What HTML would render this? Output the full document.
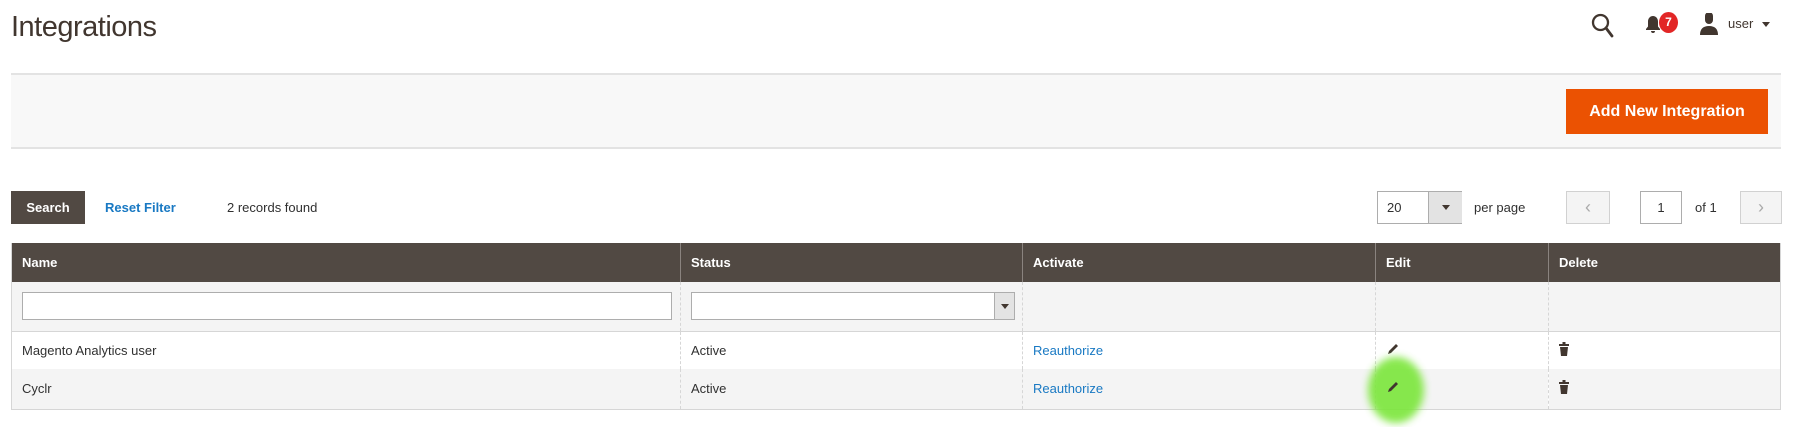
<!DOCTYPE html>
<html><head><meta charset="utf-8"><style>
*{box-sizing:border-box;margin:0;padding:0}
body{width:1798px;height:427px;background:#fff;font-family:"Liberation Sans",sans-serif;color:#303030;position:relative;overflow:hidden;font-size:13px}
.a{position:absolute}
h1{position:absolute;left:11px;top:11px;font-weight:400;font-size:29px;color:#41362f;letter-spacing:-0.5px}
.bar{left:11px;top:73px;width:1770px;height:76px;background:#f8f8f8;border-top:2px solid #e3e3e3;border-bottom:2px solid #e3e3e3}
.add{left:1566px;top:89px;width:202px;height:45px;background:#eb5202;color:#fff;font-weight:bold;font-size:16px;line-height:45px;text-align:center}
.search{left:11px;top:191px;width:74px;height:33px;background:#514943;color:#fff;font-weight:bold;line-height:33px;text-align:center}
.link{color:#1979c3}
table{position:absolute;left:11px;top:243px;width:1770px;border-collapse:collapse;font-size:13px}
th{background:#514943;color:#fff;text-align:left;font-weight:bold;height:39px;padding-left:10px;border-left:1px solid #8a837f}
th:first-child{border-left:none}
td{height:38px;padding-left:10px;border-left:1px dashed #d6d6d6}
td:first-child{border-left:none}
tr.f td{background:#f4f4f4;height:49px;border-bottom:1px solid #d6d6d6}
tr.r2 td{background:#f4f4f4;height:40px}
table{border:1px solid #d6d6d6;border-top:none}
.inp{height:28px;border:1px solid #adadad;background:#fff}
</style></head><body>
<h1>Integrations</h1>
<svg class="a" style="left:1591px;top:13px" width="24" height="26" viewBox="0 0 24 26"><circle cx="9.5" cy="9.5" r="7.5" fill="none" stroke="#41362f" stroke-width="2.3"/><path d="M15 15l6 8" stroke="#41362f" stroke-width="2.8" stroke-linecap="round"/></svg>
<svg class="a" style="left:1645px;top:15px" width="16" height="20" viewBox="0 0 16 20"><path d="M8 1c-3 0-5 2.5-5 5.5v5L1 14v1h14v-1l-2-2.5v-5C13 3.5 11 1 8 1z M6 16a2 2 0 004 0z" fill="#41362f"/></svg>
<div class="a" style="left:1659px;top:12px;width:19px;height:21px;border-radius:50%;background:#e22626;color:#fff;font-weight:bold;font-size:12px;text-align:center;line-height:21px">7</div>
<svg class="a" style="left:1699px;top:13px" width="20" height="22" viewBox="0 0 20 22"><path d="M6 3a4 4 0 018 0v4a4 4 0 01-8 0z" fill="#41362f"/><path d="M1 22c0-6 3-9 9-9s9 3 9 9z" fill="#41362f"/></svg>
<div class="a" style="left:1728px;top:16px;font-size:13px;color:#41362f">user</div>
<div class="a" style="left:1762px;top:22px;border-left:4px solid transparent;border-right:4px solid transparent;border-top:5px solid #41362f"></div>
<div class="a bar"></div>
<div class="a add">Add New Integration</div>
<div class="a search">Search</div>
<div class="a link" style="left:105px;top:200px;font-weight:bold">Reset Filter</div>
<div class="a" style="left:227px;top:200px">2 records found</div>
<div class="a" style="left:1377px;top:191px;width:85px;height:33px;border:1px solid #adadad;background:#fff"><span style="position:absolute;left:9px;top:8px">20</span><div style="position:absolute;left:50px;top:0;width:34px;height:31px;background:#e3e3e3;border-left:1px solid #adadad"><div style="position:absolute;left:13px;top:13px;border-left:4px solid transparent;border-right:4px solid transparent;border-top:5px solid #41362f"></div></div></div>
<div class="a" style="left:1474px;top:200px">per page</div>
<div class="a" style="left:1566px;top:191px;width:44px;height:33px;border:1px solid #d1d1d1;background:#f4f4f4;color:#aaa;text-align:center;line-height:30px;font-size:18px">&#8249;</div>
<div class="a" style="left:1640px;top:191px;width:42px;height:33px;border:1px solid #adadad;text-align:center;line-height:31px">1</div>
<div class="a" style="left:1695px;top:200px">of 1</div>
<div class="a" style="left:1740px;top:191px;width:42px;height:33px;border:1px solid #d1d1d1;background:#f4f4f4;color:#aaa;text-align:center;line-height:30px;font-size:18px">&#8250;</div>
<table>
<tr><th style="width:669px">Name</th><th style="width:342px">Status</th><th style="width:353px">Activate</th><th style="width:173px">Edit</th><th>Delete</th></tr>
<tr class="f"><td><div class="inp" style="width:650px"></div></td><td><div class="inp" style="width:324px;position:relative"><div style="position:absolute;right:0;top:0;width:20px;height:26px;background:#e3e3e3;border-left:1px solid #adadad"><div style="position:absolute;left:6px;top:11px;border-left:4px solid transparent;border-right:4px solid transparent;border-top:5px solid #41362f"></div></div></div></td><td></td><td></td><td></td></tr>
<tr><td>Magento Analytics user</td><td>Active</td><td class="link">Reauthorize</td><td><svg width="14" height="14" viewBox="0 0 14 14"><path d="M2 12l1-3 7-7 2 2-7 7z" fill="#41362f"/></svg></td><td><svg width="10" height="14" viewBox="0 0 10 14"><rect x="3.5" y="0" width="3" height="2" fill="#41362f"/><rect x="0" y="2" width="10" height="2" fill="#41362f"/><path d="M1 5h8l-1 9H2z" fill="#41362f"/></svg></td></tr>
<tr class="r2"><td>Cyclr</td><td>Active</td><td class="link">Reauthorize</td><td style="position:relative"><div style="position:absolute;left:-8px;top:-12px;width:56px;height:66px;border-radius:50%;background:#7be63a;filter:blur(4px);opacity:.9"></div><svg style="position:relative" width="14" height="14" viewBox="0 0 14 14"><path d="M2 12l1-3 7-7 2 2-7 7z" fill="#41362f"/></svg></td><td><svg width="10" height="14" viewBox="0 0 10 14"><rect x="3.5" y="0" width="3" height="2" fill="#41362f"/><rect x="0" y="2" width="10" height="2" fill="#41362f"/><path d="M1 5h8l-1 9H2z" fill="#41362f"/></svg></td></tr>
</table>
</body></html>
